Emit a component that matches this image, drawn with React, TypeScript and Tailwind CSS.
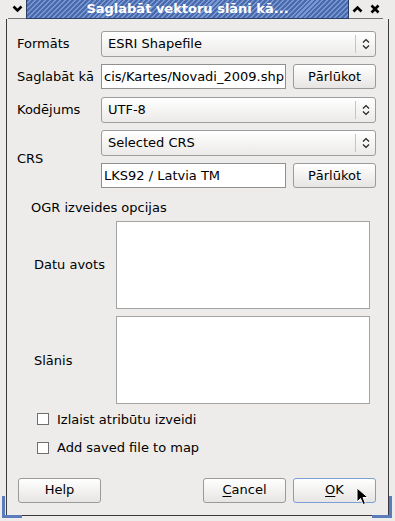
import React from 'react';

const font = "font-['DejaVu_Sans',sans-serif]";

const Combo: React.FC<{ value: string }> = ({ value }) => (
  <div className="flex h-[26px] w-[275px] items-center rounded-[3px] border border-[#9d9d9d] bg-gradient-to-b from-white to-[#ebeae8] pl-[6px] text-[13px] text-black">
    <span className="flex-1 whitespace-nowrap">{value}</span>
    <span className="h-[18px] w-px bg-[#c6c5c3]" />
    <span className="flex w-[19px] justify-center">
      <svg width="8" height="12" viewBox="0 0 8 12">
        <path d="M1 4.5 L4 1.5 L7 4.5 M1 7.5 L4 10.5 L7 7.5" fill="none" stroke="#222" strokeWidth="1.2" />
      </svg>
    </span>
  </div>
);

const Btn: React.FC<{ children: React.ReactNode; focus?: boolean }> = ({ children, focus }) => (
  <div
    className={`flex h-[25px] w-[83px] items-center justify-center rounded-[3px] border bg-gradient-to-b from-white to-[#e6e5e3] text-[13px] text-black ${
      focus ? 'border-[#7a9fd6]' : 'border-[#9a9a9a]'
    }`}
  >
    {children}
  </div>
);

const TextInput: React.FC<{ value: string }> = ({ value }) => (
  <div className="flex h-[25px] w-[185px] items-center overflow-hidden whitespace-nowrap border border-[#8f8f8f] bg-white pl-[2px] text-[13px] text-black">
    {value}
  </div>
);

const Check: React.FC<{ label: string }> = ({ label }) => (
  <div className="flex items-center text-[13px] text-black">
    <span className="ml-[20px] mr-[8px] h-[12px] w-[12px] border border-[#6f6f6f] bg-white" />
    {label}
  </div>
);

export default function App() {
  return (
    <div className={`relative h-[521px] w-[395px] overflow-hidden bg-[#edeceb] ${font}`}>
      {/* title bar */}
      <div className="flex h-[19px] items-stretch pl-[8px] pr-[12px]">
        <div className="flex w-[18px] items-center justify-center border-b border-[#777] bg-[#edeceb]">
          <svg width="11" height="8" viewBox="0 0 11 8">
            <path d="M1.5 1.5 L5.5 5.5 L9.5 1.5" fill="none" stroke="#000" strokeWidth="2.6" />
          </svg>
        </div>
        <div className="flex flex-1 items-center justify-center border-x border-b border-[#2c3e66] bg-[repeating-linear-gradient(135deg,#4a6aab_0px,#4a6aab_2px,#7898d4_2px,#7898d4_3.5px)]">
          <span className="whitespace-nowrap text-[13px] font-bold text-white">Saglabāt vektoru slāni kā...</span>
        </div>
        <div className="flex w-[17px] items-center justify-center border-b border-[#777]">
          <svg width="11" height="8" viewBox="0 0 11 8">
            <path d="M1.5 6.5 L5.5 2.5 L9.5 6.5" fill="none" stroke="#000" strokeWidth="2.6" />
          </svg>
        </div>
        <div className="flex w-[17px] items-center justify-center border-b border-[#777]">
          <svg width="10" height="10" viewBox="0 0 10 10">
            <path d="M1.5 1.5 L8.5 8.5 M8.5 1.5 L1.5 8.5" fill="none" stroke="#000" strokeWidth="2.6" />
          </svg>
        </div>
      </div>

      {/* window body */}
      <div className="mx-[6px] h-[497px] border-x border-b border-[#3a3a3a] pl-[10px] pt-[12px]">
        <div className="flex h-[26px] items-center">
          <span className="w-[84px] text-[13px] text-black">Formāts</span>
          <Combo value="ESRI Shapefile" />
        </div>
        <div className="mt-[7px] flex h-[25px] items-center">
          <span className="w-[84px] whitespace-nowrap text-[13px] text-black">Saglabāt kā</span>
          <TextInput value="cis/Kartes/Novadi_2009.shp" />
          <div className="ml-[7px]">
            <Btn>Pārlūkot</Btn>
          </div>
        </div>
        <div className="mt-[8px] flex h-[26px] items-center">
          <span className="w-[84px] text-[13px] text-black">Kodējums</span>
          <Combo value="UTF-8" />
        </div>
        <div className="mt-[7px] flex items-center">
          <span className="w-[84px] text-[13px] text-black">CRS</span>
          <div className="flex flex-col gap-[7px]">
            <Combo value="Selected CRS" />
            <div className="flex items-center">
              <TextInput value="LKS92 / Latvia TM" />
              <div className="ml-[7px]">
                <Btn>Pārlūkot</Btn>
              </div>
            </div>
          </div>
        </div>

        {/* OGR group */}
        <div className="mt-[10px] pl-[14px] text-[13px] text-black">OGR izveides opcijas</div>
        <div className="mt-[3px] flex items-center">
          <span className="w-[99px] pl-[17px] text-[13px] text-black">Datu avots</span>
          <div className="h-[88px] w-[254px] border border-[#a3a3a3] bg-white" />
        </div>
        <div className="mt-[7px] flex items-center">
          <span className="w-[99px] pl-[17px] pt-[2px] text-[13px] text-black">Slānis</span>
          <div className="h-[88px] w-[254px] border border-[#a3a3a3] bg-white" />
        </div>

        <div className="mt-[6px] flex flex-col gap-[9px]">
          <Check label="Izlaist atribūtu izveidi" />
          <Check label="Add saved file to map" />
        </div>

        <div className="mt-[20px] flex items-center pr-[12px]">
          <div className="ml-[1px]">
            <Btn>Help</Btn>
          </div>
          <div className="flex-1" />
          <Btn>
            <span className="underline underline-offset-2">C</span>ancel
          </Btn>
          <div className="ml-[7px]">
            <Btn focus>
              <span className="underline underline-offset-2">O</span>K
            </Btn>
          </div>
        </div>
      </div>

      {/* window corner marks */}
      <div className="absolute bottom-[3px] left-[2px] h-[22px] w-[20px] border-b-[3px] border-l-[3px] border-[#5b7bbd]" />
      <div className="absolute bottom-[3px] right-[3px] h-[22px] w-[20px] border-b-[3px] border-r-[3px] border-[#5b7bbd]" />

      {/* mouse cursor */}
      <svg className="absolute left-[356px] top-[487px]" width="14" height="20" viewBox="0 0 14 20">
        <path d="M1 1 L1 15 L4.5 11.5 L7 17.5 L9.5 16.5 L7 10.5 L12 10.5 Z" fill="#000" stroke="#fff" strokeWidth="1" />
      </svg>
    </div>
  );
}
